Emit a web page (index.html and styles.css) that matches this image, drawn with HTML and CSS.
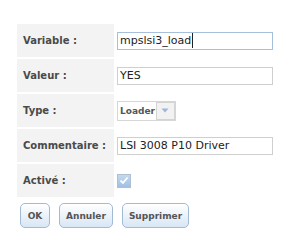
FILE: index.html
```
<html>

<head>
    <meta charset="utf-8">
    <title>Variable</title>
    <link rel="stylesheet" href="styles.css">
</head>

<body>
    <div class="panel">
        <div class="form">
            <div class="label">Variable :</div>
            <div class="field"><input type="text" class="text focus" value="mpslsi3_load"><span class="caret"></span></div>

            <div class="label">Valeur :</div>
            <div class="field"><input type="text" class="text" value="YES"></div>

            <div class="label">Type :</div>
            <div class="field">
                <div class="combo">
                    <span class="comboText">Loader</span>
                    <span class="comboBtn">
                        <svg width="8" height="5" viewBox="0 0 8 5"><path d="M0.5 0.5 L7.5 0.5 L4 4.5 Z" fill="#9db6d6"/></svg>
                    </span>
                </div>
            </div>

            <div class="label">Commentaire :</div>
            <div class="field"><input type="text" class="text" value="LSI 3008 P10 Driver"></div>

            <div class="label">Activé :</div>
            <div class="field">
                <span class="check">
                    <svg width="10" height="9" viewBox="0 0 10 9"><path d="M1.5 4.5 L4 7 L8.5 1.5" stroke="#fff" stroke-width="1.8" fill="none"/></svg>
                </span>
            </div>
        </div>

        <div class="buttons">
            <button class="btn btnOk">OK</button>
            <button class="btn btnCancel">Annuler</button>
            <button class="btn btnDel">Supprimer</button>
        </div>
    </div>
</body>

</html>
```

FILE: styles.css
```
html {
    padding: 0;
    margin: 0;
}

body {
    margin: 0;
    background-color: #fff;
    font-family: "DejaVu Sans", Verdana, sans-serif;
}

.panel {
    padding: 24px 0 0 17px;
}

.form {
    display: grid;
    grid-template-columns: 97px 170px;
    grid-auto-rows: 33px;
    row-gap: 2px;
}

.label {
    background-color: #f3f3f3;
    color: #4a4a4a;
    font-size: 10px;
    font-weight: bold;
    padding-left: 6px;
    display: flex;
    align-items: center;
}

.field {
    padding-left: 3px;
    display: flex;
    align-items: center;
    position: relative;
}

.text {
    box-sizing: border-box;
    width: 156px;
    height: 18px;
    border: 1px solid #cfcfcf;
    padding: 0 2px;
    font-family: "DejaVu Sans", Verdana, sans-serif;
    font-size: 11px;
    color: #222;
    outline: none;
}

.focus {
    border-color: #a6c0dc;
}

/* text cursor drawn over the focused field */
.caret {
    position: absolute;
    left: 78px;
    top: 9px;
    width: 1px;
    height: 15px;
    background-color: #222;
}

.combo {
    display: flex;
    align-items: center;
    height: 20px;
    width: 59px;
    box-sizing: border-box;
    border: 1px solid #d6d6d6;
    background-color: #fff;
}

.comboText {
    font-size: 9px;
    font-weight: bold;
    color: #555;
    padding-left: 2px;
    width: 35px;
}

.comboBtn {
    width: 18px;
    height: 16px;
    margin-left: 1px;
    border: 1px solid #d4d4d4;
    background-color: #f2f2f2;
    display: flex;
    align-items: center;
    justify-content: center;
}

.check {
    width: 12px;
    height: 12px;
    border: 1px solid #aebfd2;
    background: linear-gradient(#c4d9ef, #9fc0e3);
    display: flex;
    align-items: center;
    justify-content: center;
}

.buttons {
    display: flex;
    gap: 9px;
    margin-top: 6px;
    padding-left: 3px;
}

.btn {
    height: 25px;
    border: 1px solid #a3bad3;
    border-radius: 5px;
    background: linear-gradient(#ffffff, #d8e6f5);
    color: #555;
    font-family: "DejaVu Sans", Verdana, sans-serif;
    font-size: 9px;
    font-weight: bold;
    padding: 0;
}

.btnOk {
    width: 30px;
}

.btnCancel {
    width: 54px;
}

.btnDel {
    width: 67px;
}
```
